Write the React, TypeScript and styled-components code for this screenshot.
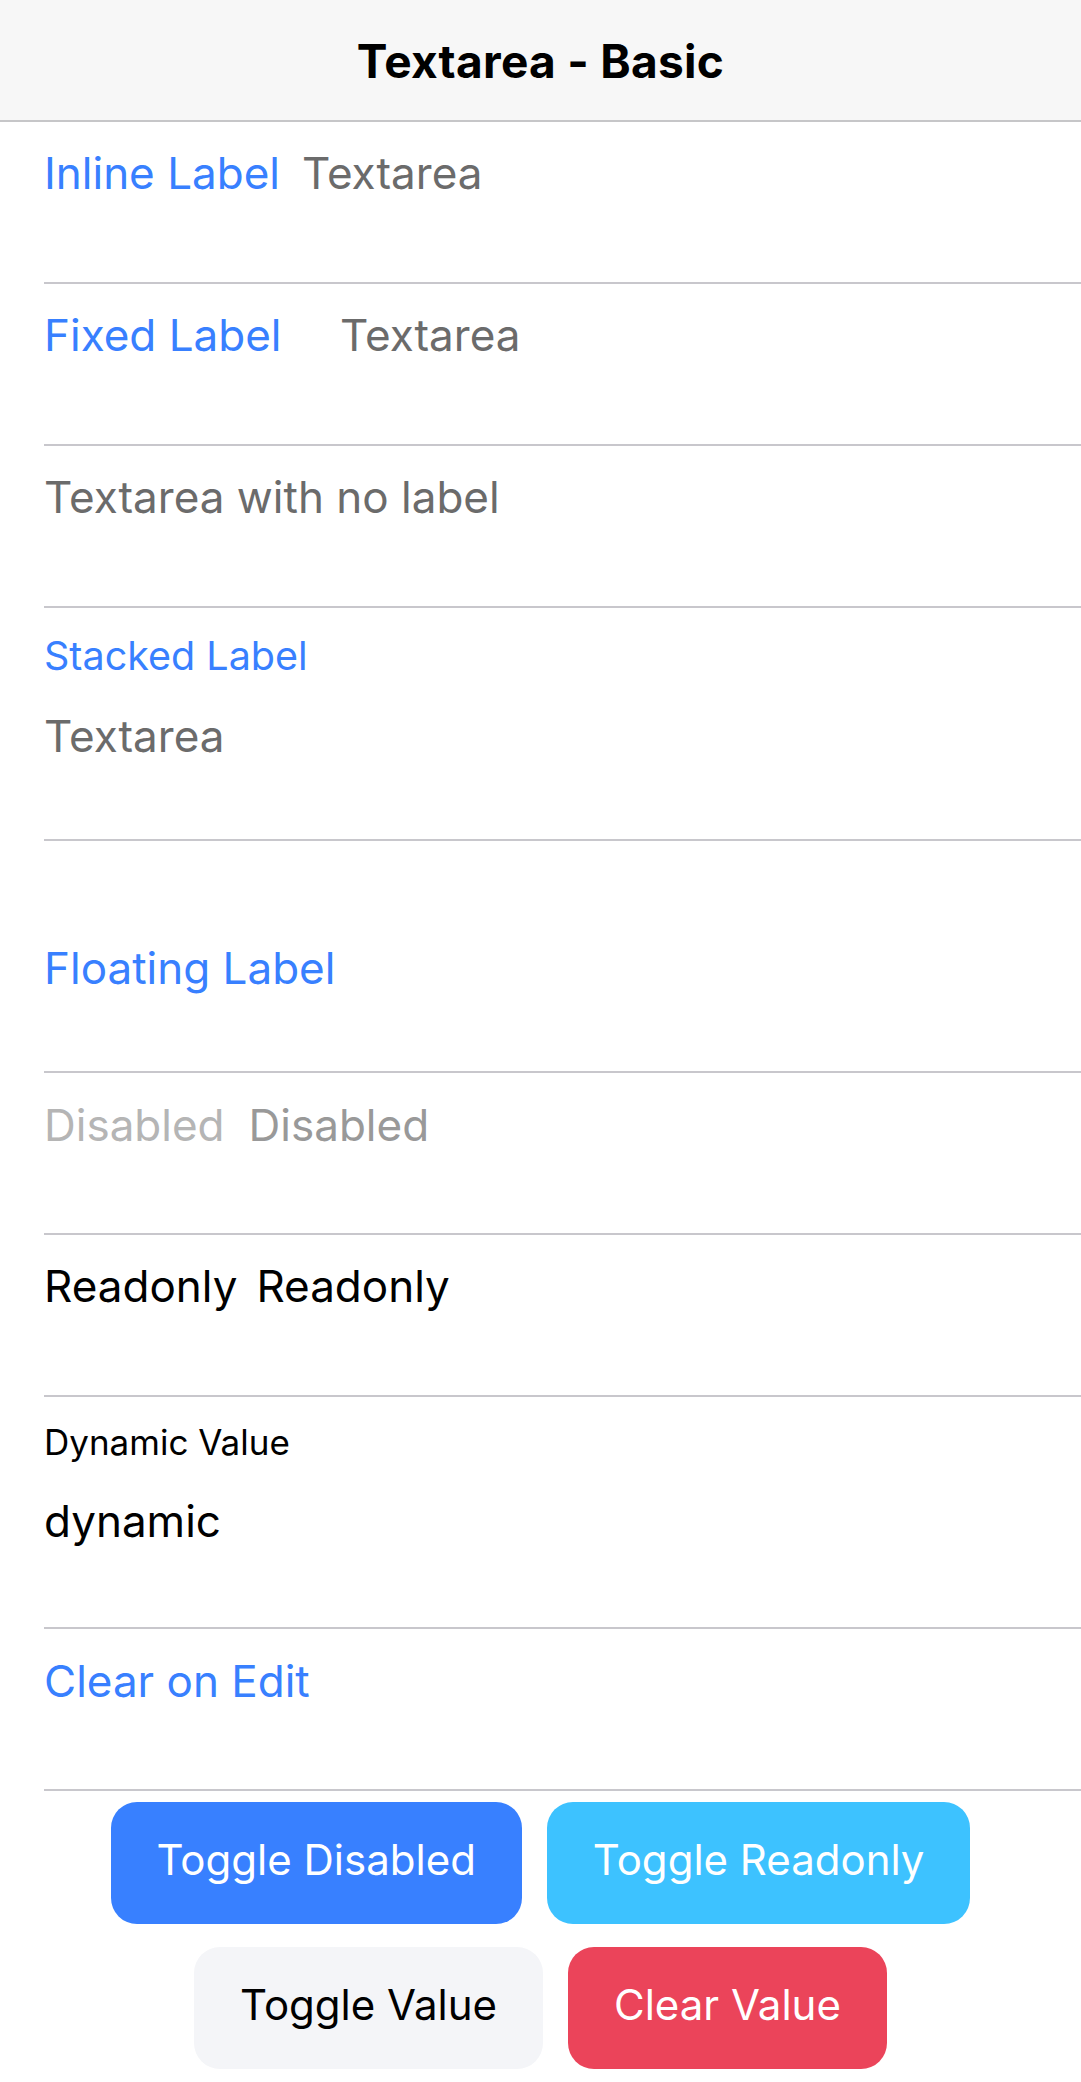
import React from "react";
import styled, { createGlobalStyle } from "styled-components";

const GlobalStyle = createGlobalStyle`
  html, body { margin: 0; padding: 0; background: #ffffff; }
  body { font-family: Inter, "Noto Sans", sans-serif; -webkit-font-smoothing: antialiased; }
  * { box-sizing: border-box; }
`;

const Page = styled.div`
  display: flex;
  flex-direction: column;
  width: 100%;
`;

const Toolbar = styled.header`
  height: 122px;
  padding-top: 1px;
  display: flex;
  align-items: center;
  justify-content: center;
  background: #f7f7f7;
  border-bottom: 2px solid #c6c6c8;
`;

const Title = styled.h1`
  margin: 0;
  font-size: 46px;
  font-weight: 700;
  color: #000;
  letter-spacing: 0.3px;
`;

const List = styled.div`
  display: flex;
  flex-direction: column;
`;

const Item = styled.div<{ $height: number }>`
  height: ${(p) => p.$height}px;
  padding-left: 44px;
  display: flex;
`;

const ItemInner = styled.div<{ $stacked?: boolean; $top: number }>`
  flex: 1;
  display: flex;
  flex-direction: ${(p) => (p.$stacked ? "column" : "row")};
  align-items: flex-start;
  padding-top: ${(p) => p.$top}px;
  border-bottom: 2px solid #c8c7cc;
`;

type Tone = "primary" | "muted" | "soft" | "faint" | "dark";
const toneColor: Record<Tone, string> = {
  primary: "#3880ff",
  muted: "#6b6b6b",
  soft: "#999999",
  faint: "#b5b5b5",
  dark: "#000000",
};

const Label = styled.span<{ $tone: Tone; $width?: number; $size?: number; $gap?: number }>`
  flex: 0 0 auto;
  ${(p) => (p.$width ? `width: ${p.$width}px;` : "")}
  margin-right: ${(p) => p.$gap ?? 0}px;
  font-size: ${(p) => p.$size ?? 44}px;
  line-height: ${(p) => Math.round((p.$size ?? 44) * 1.18)}px;
  color: ${(p) => toneColor[p.$tone]};
  white-space: nowrap;
`;

const Value = styled.span<{ $tone: Tone; $offset?: number }>`
  font-size: 44px;
  line-height: 52px;
  margin-top: ${(p) => p.$offset ?? 0}px;
  color: ${(p) => toneColor[p.$tone]};
  white-space: nowrap;
`;

const ButtonBar = styled.div`
  display: flex;
  flex-wrap: wrap;
  justify-content: center;
`;

type BtnColor = "primary" | "secondary" | "light" | "danger";
const btnBg: Record<BtnColor, string> = {
  primary: "#3880ff",
  secondary: "#3dc2ff",
  light: "#f4f5f8",
  danger: "#eb445a",
};

const Button = styled.button<{ $color: BtnColor }>`
  height: 122px;
  margin: 11px 12.5px 12px;
  padding: 0 46px 7px;
  border: none;
  border-radius: 26px;
  background: ${(p) => btnBg[p.$color]};
  color: ${(p) => (p.$color === "light" ? "#000" : "#fff")};
  font-family: Inter, "Noto Sans", sans-serif;
  font-size: 42px;
  display: inline-flex;
  align-items: center;
  justify-content: center;
  white-space: nowrap;
  cursor: pointer;
`;

export default function App() {
  return (
    <Page>
      <GlobalStyle />
      <Toolbar>
        <Title>Textarea - Basic</Title>
      </Toolbar>
      <List>
        <Item $height={162}>
          <ItemInner $top={25}>
            <Label $tone="primary" $gap={22}>Inline Label</Label>
            <Value $tone="muted">Textarea</Value>
          </ItemInner>
        </Item>
        <Item $height={162}>
          <ItemInner $top={25}>
            <Label $tone="primary" $width={296}>Fixed Label</Label>
            <Value $tone="muted">Textarea</Value>
          </ItemInner>
        </Item>
        <Item $height={162}>
          <ItemInner $top={25}>
            <Value $tone="muted">Textarea with no label</Value>
          </ItemInner>
        </Item>
        <Item $height={233}>
          <ItemInner $stacked $top={25}>
            <Label $tone="primary" $size={39.5}>Stacked Label</Label>
            <Value $tone="muted" $offset={30}>Textarea</Value>
          </ItemInner>
        </Item>
        <Item $height={232}>
          <ItemInner $stacked $top={101}>
            <Label $tone="primary" $size={44}>Floating Label</Label>
          </ItemInner>
        </Item>
        <Item $height={162}>
          <ItemInner $top={26}>
            <Label $tone="faint" $gap={24}>Disabled</Label>
            <Value $tone="soft">Disabled</Value>
          </ItemInner>
        </Item>
        <Item $height={162}>
          <ItemInner $top={25}>
            <Label $tone="dark" $gap={19}>Readonly</Label>
            <Value $tone="dark">Readonly</Value>
          </ItemInner>
        </Item>
        <Item $height={232}>
          <ItemInner $stacked $top={25}>
            <Label $tone="dark" $size={35}>Dynamic Value</Label>
            <Value $tone="dark" $offset={32}>dynamic</Value>
          </ItemInner>
        </Item>
        <Item $height={162}>
          <ItemInner $top={26}>
            <Label $tone="primary">Clear on Edit</Label>
          </ItemInner>
        </Item>
      </List>
      <ButtonBar>
        <Button $color="primary">Toggle Disabled</Button>
        <Button $color="secondary">Toggle Readonly</Button>
        <Button $color="light">Toggle Value</Button>
        <Button $color="danger">Clear Value</Button>
      </ButtonBar>
    </Page>
  );
}
